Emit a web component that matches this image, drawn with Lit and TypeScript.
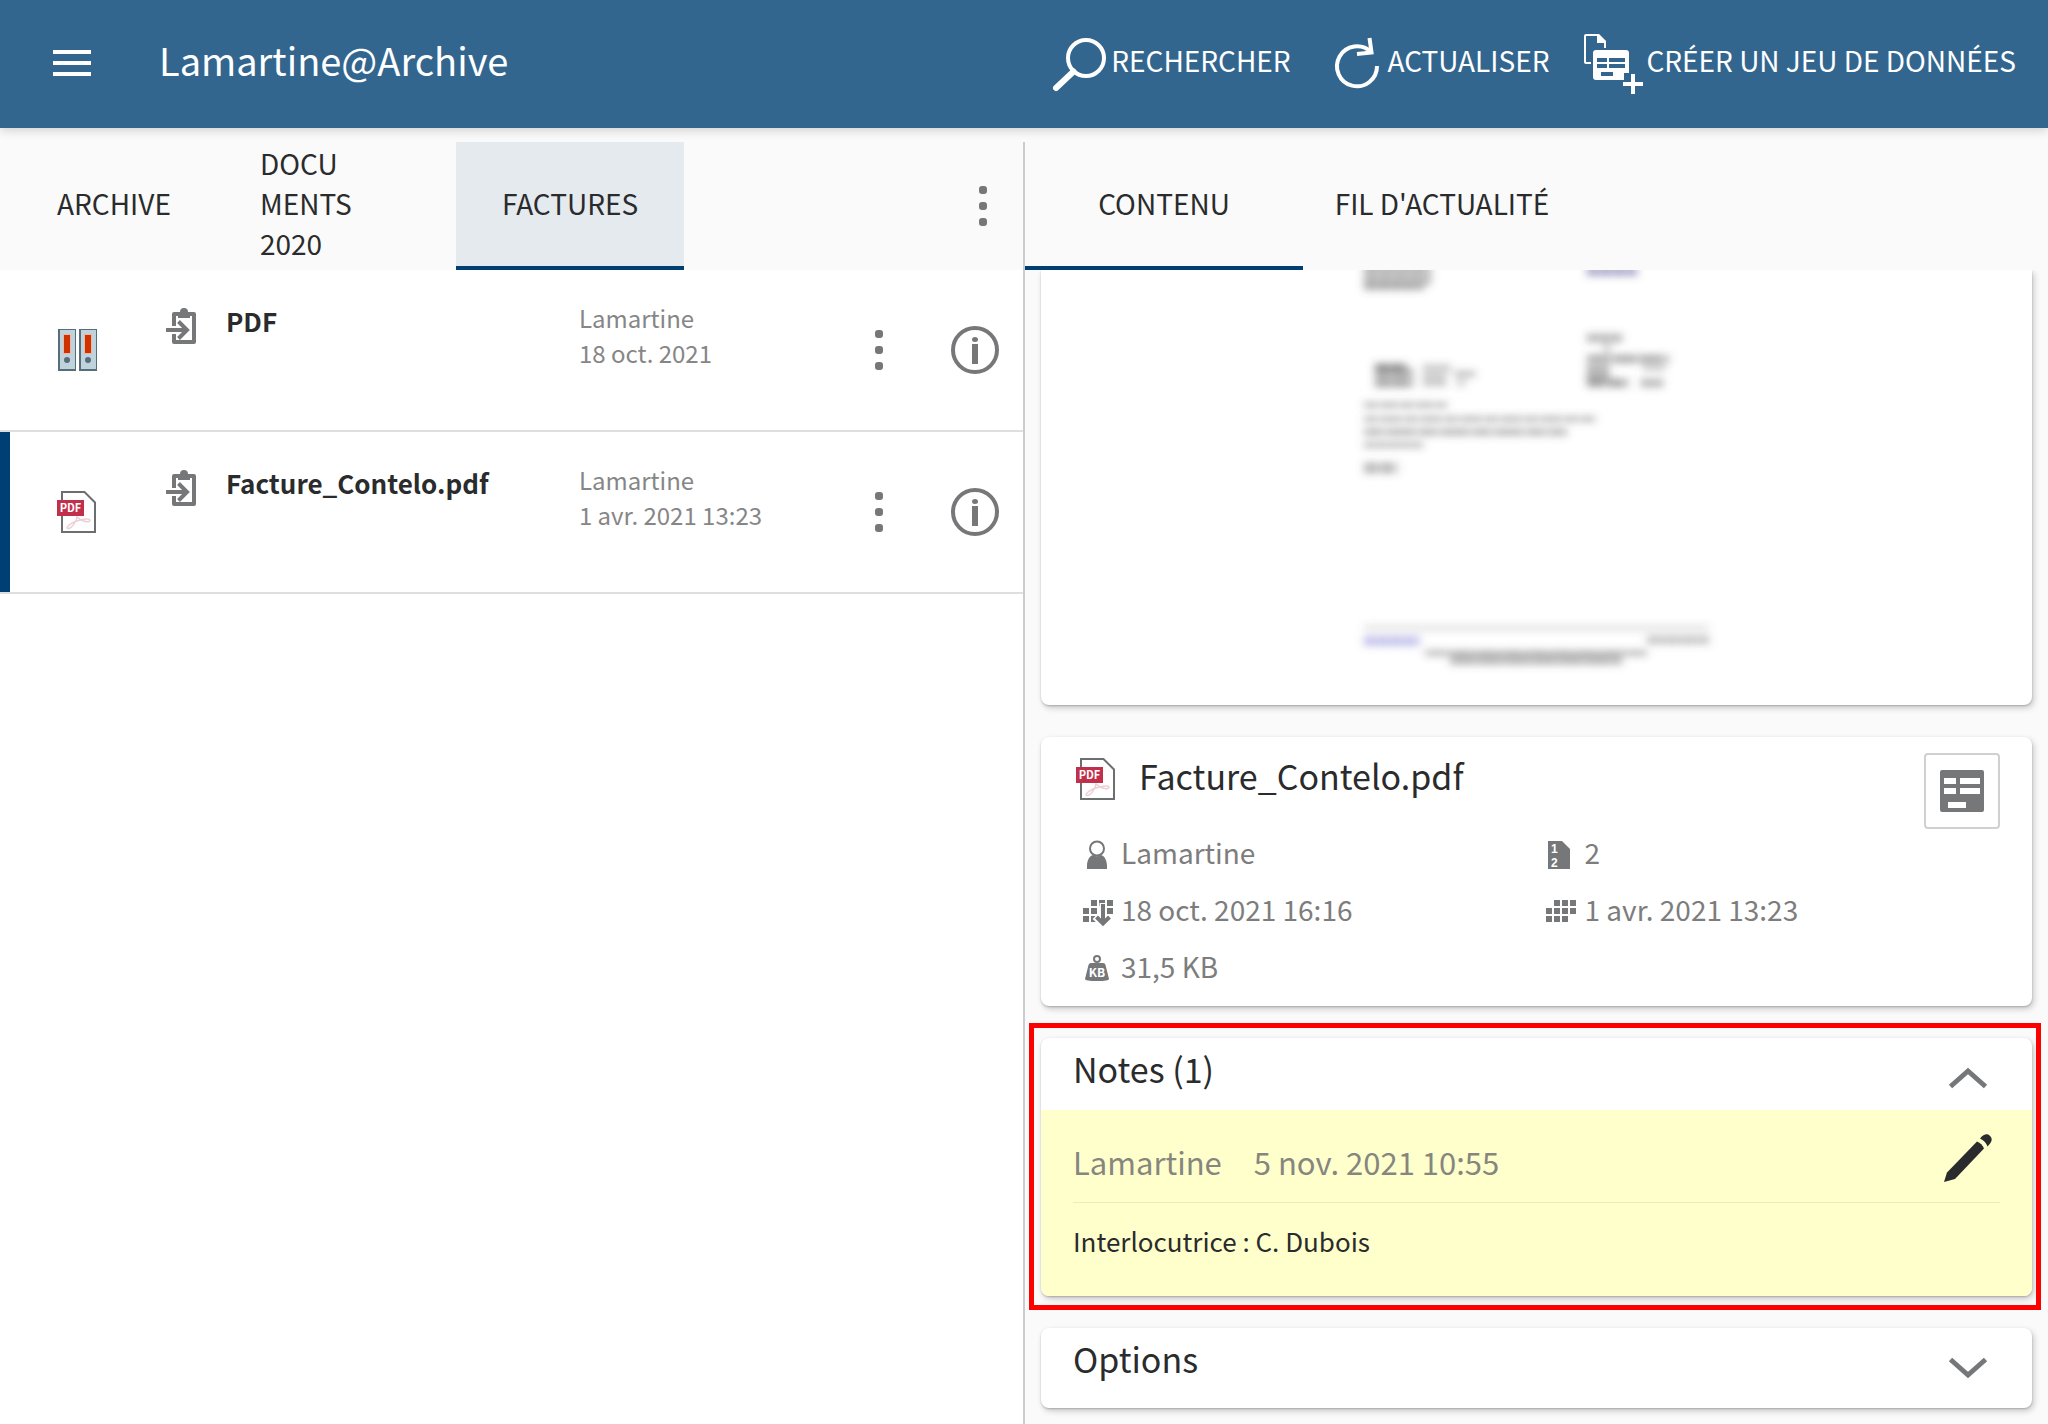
import { LitElement, html, css, svg, TemplateResult } from "lit";
import { customElement, property, state } from "lit/decorators.js";
import { classMap } from "lit/directives/class-map.js";

interface Entry {
  kind: "folder" | "pdf";
  name: string;
  owner: string;
  date: string;
}

const ENTRIES: Entry[] = [
  { kind: "folder", name: "PDF", owner: "Lamartine", date: "18 oct. 2021" },
  { kind: "pdf", name: "Facture_Contelo.pdf", owner: "Lamartine", date: "1 avr. 2021 13:23" },
];

const reset = css`
  * { box-sizing: border-box; }
  svg { display: block; flex: none; }
  button {
    margin: 0;
    padding: 0;
    border: 0;
    background: none;
    color: inherit;
    font: inherit;
    text-align: left;
    cursor: pointer;
  }
  h1, h2, p, ul { margin: 0; padding: 0; font-weight: inherit; }
  ul { list-style: none; }
`;

/* ---------- icons ---------- */

const menuIcon = html`<svg width="48" height="48" viewBox="0 0 48 48" aria-hidden="true">
  <path d="M5 12h38M5 23h38M5 34h38" stroke="#fff" stroke-width="4" />
</svg>`;

const searchIcon = html`<svg width="60" height="56" viewBox="0 0 60 56" fill="none" stroke="#fff" aria-hidden="true">
  <circle cx="35" cy="22" r="18" stroke-width="4" />
  <path d="M22.5 35.500L5 52" stroke-width="6" stroke-linecap="round" />
</svg>`;

const refreshIcon = html`<svg width="64" height="56" viewBox="0 0 64 56" fill="none" stroke="#fff" stroke-width="4" aria-hidden="true">
  <path d="M53 30A20 20 0 1 1 47 16" />
  <path d="M45.500 2L47.500 16.500L33 18" />
</svg>`;

const datasetIcon = html`<svg width="64" height="64" viewBox="0 0 64 64" aria-hidden="true">
  <path d="M9 31H4Q3 31 3 30V4Q3 3 4 3H16L23 10V16" fill="none" stroke="#fff" stroke-width="2" />
  <path d="M15 2H17L24 9V11H15Z" fill="#fff" />
  <path fill="#fff" fill-rule="evenodd" d="M14 18h30q3 0 3 3v20h-5v7H14q-3 0-3-3V21q0-3 3-3zM15 26v4h10v-4zM27 26v4h16v-4zM15 32v4h10v-4zM27 32v4h16v-4zM19 40v4h12v-4z" />
  <path d="M51 42v20M41 52h20" stroke="#fff" stroke-width="4" />
</svg>`;

const kebabIcon = html`<svg width="8" height="40" viewBox="0 0 8 40" fill="#757779" aria-hidden="true">
  <rect width="8" height="8" rx="3" /><rect y="16" width="8" height="8" rx="3" /><rect y="32" width="8" height="8" rx="3" />
</svg>`;

const infoIcon = html`<svg width="48" height="48" viewBox="0 0 48 48" aria-hidden="true">
  <circle cx="24" cy="24" r="22" fill="none" stroke="#757779" stroke-width="4" />
  <ellipse cx="24" cy="13.500" rx="3" ry="2.500" fill="#757779" />
  <path d="M21 18h6v20h-6z" fill="#757779" />
</svg>`;

const binder = (x: number) => svg`<g transform="translate(${x} 0)">
  <path d="M0 0h18v42H0z" fill="#566e7c" />
  <path d="M2 1h15v39H2z" fill="#bfd3dd" />
  <path d="M5 5h8v20H5z" fill="#efb6a5" />
  <path d="M6 6h6v18H6z" fill="#cc3300" />
  <circle cx="9" cy="31" r="3" fill="#566e7c" />
</g>`;

const folderIcon = html`<svg width="40" height="42" viewBox="0 0 40 42" aria-hidden="true">${binder(1)}${binder(22)}</svg>`;

const pdfIcon = html`<svg width="40" height="42" viewBox="0 0 40 42" role="img" aria-label="PDF">
  <path d="M5 1H27.500L38 11.500V41H5Z" fill="#fff" stroke="#6c6e70" stroke-width="2" />
  <path d="M20 25C20 30 15 37 11.500 37.500S11 33 20 30S33 28 33 29.500S26 32 20 26" fill="none" stroke="#ecd0d4" stroke-width="1.500" />
  <rect y="9" width="27" height="16" fill="#c1304b" />
  <text x="13.500" y="21" text-anchor="middle" font-size="11" font-weight="700" fill="#fff">PDF</text>
</svg>`;

const checkInIcon = html`<svg width="30" height="36" viewBox="0 0 30 36" aria-hidden="true">
  <path d="M8 18V6H28V34H8V26" fill="none" stroke="#757779" stroke-width="4" stroke-linejoin="round" />
  <path d="M12 4h2a4 4 0 0 1 8 0h2v6H12z" fill="#757779" />
  <path d="M0 22H21M12.500 13.500L21 22L12.500 30.500" fill="none" stroke="#757779" stroke-width="4" />
</svg>`;

const personIcon = html`<svg width="36" height="36" viewBox="0 0 36 36" aria-hidden="true">
  <ellipse cx="17" cy="14.500" rx="7" ry="7" fill="#fff" stroke="#757779" stroke-width="2" />
  <path d="M7 35V32C7 26 9.500 22 13 21Q17 23.500 21 21C24.500 22 27 26 27 32V35Z" fill="#757779" />
</svg>`;

const pagesIcon = html`<svg width="36" height="36" viewBox="0 0 36 36" aria-hidden="true">
  <path d="M4 7H18L26 15V35H4Z" fill="#757779" />
  <g class="digits" font-size="12" font-weight="700" fill="#fff">
    <text x="7" y="19">1</text>
    <text x="7" y="33">2</text>
  </g>
</svg>`;

const squares = (dx: number, cells: [number, number][]) =>
  cells.map(([c, r]) => svg`<rect x=${dx + c * 8} y=${9 + r * 8} width="6" height="6" fill="#757779" />`);

const calendarIcon = html`<svg width="36" height="36" viewBox="0 0 36 36" aria-hidden="true">
  ${squares(2, [[1, 0], [2, 0], [3, 0], [0, 1], [1, 1], [2, 1], [3, 1], [0, 2], [1, 2], [2, 2]])}
</svg>`;

const importDateIcon = html`<svg width="36" height="36" viewBox="0 0 36 36" aria-hidden="true">
  ${squares(3, [[1, 0], [2, 0], [3, 0], [0, 1], [1, 1], [3, 1], [0, 2], [1, 2]])}
  <path d="M23 12V33M15 25.500L23 33L31 25.500" fill="none" stroke="#fff" stroke-width="7" />
  <path d="M23 13V32M16.500 26L23 32.500L29.500 26" fill="none" stroke="#757779" stroke-width="4" />
</svg>`;

const weightIcon = html`<svg width="36" height="36" viewBox="0 0 36 36" aria-hidden="true">
  <circle cx="17" cy="11" r="3" fill="none" stroke="#757779" stroke-width="2" />
  <path d="M11 15H23Q25 15 25.500 17L29 31Q29 33 17 33T5 31L8.500 17Q9 15 11 15Z" fill="#757779" />
  <text x="17" y="29" text-anchor="middle" font-size="12" font-weight="700" fill="#fff">KB</text>
</svg>`;

const formIcon = html`<svg width="44" height="42" viewBox="0 0 44 42" aria-hidden="true">
  <path fill="#757779" fill-rule="evenodd" d="M2 0h40q2 0 2 2v38q0 2-2 2H2q-2 0-2-2V2q0-2 2-2zM4 8v6h12V8zM20 8v6h20V8zM4 18v6h12v-6zM20 18v6h20v-6zM8 32v6h18v-6z" />
</svg>`;

const chevron = (open: boolean) => html`<svg width="40" height="40" viewBox="0 0 40 40" aria-hidden="true">
  <path d=${open ? "M2.500 28.500L20 13L37.500 28.500" : "M2.500 11.500L20 27L37.500 11.500"} fill="none" stroke="#757779" stroke-width="5" />
</svg>`;

const pencilIcon = html`<svg width="48" height="48" viewBox="0 0 48 48" fill="#2a2b2d" aria-hidden="true">
  <path d="M0 48L3 38.500L33 7.500Q38 9.500 40 14.500L11 45Z" />
  <path d="M36 4.500C40-.500 44-.500 46 2C49 5 48 8 43.500 12.500Q41.500 7 36 4.500Z" />
</svg>`;

/* ---------- left pane ---------- */

@customElement("archive-list")
export class ArchiveList extends LitElement {
  @state() private selected = 1;

  static styles = [
    reset,
    css`
      :host { display: flex; flex-direction: column; background: #fff; border-right: 2px solid #ccc; }
      svg text { font-family: "Noto Sans CJK SC", sans-serif; }
      .tabs { display: flex; height: 128px; background: #fafafa; }
      .tab {
        flex: 0 1 228px;
        padding: 0 32px 2px;
        border-bottom: 4px solid transparent;
        font-size: 28px;
        line-height: 40px;
        text-align: center;
      }
      .tab.wrapped { text-align: left; }
      .tab.active { background: #e5eaee; border-bottom-color: #003f73; }
      .more { display: flex; align-items: center; justify-content: center; width: 80px; margin-left: auto; }
      .row {
        display: grid;
        grid-template-columns: 156px 60px minmax(0, 7fr) minmax(0, 5fr) 96px 96px;
        height: 162px;
        border-left: 10px solid transparent;
        background: linear-gradient(#dfdfdf, #dfdfdf) bottom / 100% 2px no-repeat border-box;
        padding-bottom: 2px;
      }
      .row.selected { border-image: linear-gradient(#003f73 160px, #dfdfdf 160px) 0 0 0 10; }
      .kind { align-self: center; padding-left: 47px; }
      .state { padding-top: 38px; }
      .name { padding-top: 33px; font-size: 26px; font-weight: 700; line-height: 35px; }
      .meta { padding-top: 30px; font-size: 24px; line-height: 35px; color: #868686; }
      .action { display: flex; align-items: center; justify-content: center; }
    `,
  ];

  render() {
    return html`
      <nav class="tabs" aria-label="Chemin">
        <button class="tab">ARCHIVE</button>
        <button class="tab wrapped">DOCU<br />MENTS<br />2020</button>
        <button class="tab active" aria-current="page">FACTURES</button>
        <button class="more" aria-label="Plus">${kebabIcon}</button>
      </nav>
      <ul>
        ${ENTRIES.map(
          (e, i) => html`<li
            class=${classMap({ row: true, selected: i === this.selected })}
            @click=${() => (this.selected = i)}
          >
            <div class="kind">${e.kind === "pdf" ? pdfIcon : folderIcon}</div>
            <div class="state">${checkInIcon}</div>
            <div class="name">${e.name}</div>
            <div class="meta"><p>${e.owner}</p><p>${e.date}</p></div>
            <button class="action" aria-label="Actions">${kebabIcon}</button>
            <button class="action" aria-label="Informations">${infoIcon}</button>
          </li>`
        )}
      </ul>
    `;
  }
}

/* ---------- blurred page preview ---------- */

const smudge = (x: number, y: number, w: number, h: number, o: number, dash = "11 1", c = "#555") =>
  svg`<path d="M${x} ${y}h${w}" stroke=${c} stroke-width=${h} stroke-dasharray=${dash} opacity=${o} />`;

@customElement("page-preview")
export class PagePreview extends LitElement {
  static styles = [reset, css`:host { display: flex; justify-content: center; overflow: hidden; }`];

  render() {
    return html`<svg width="400" height="435" viewBox="0 0 400 435" role="img" aria-label="Aperçu du document">
      <defs><filter id="soft" x="-10" y="-20" width="420" height="470" filterUnits="userSpaceOnUse"><feGaussianBlur stdDeviation="4.200 3.600" /></filter></defs>
      <g filter="url(#soft)">
        ${smudge(27, 4, 67, 22, 0.4, "14 1")}
        ${smudge(27, 17, 60, 8, 0.4, "12 1")}
        ${smudge(250, 1, 50, 11, 0.5, "12 1", "#6060a0")}
        ${smudge(250, 68, 36, 10, 0.38)}
        ${smudge(266, 78, 8, 10, 0.25)}
        ${smudge(250, 89, 82, 10, 0.4, "24 2")}
        ${smudge(250, 103, 22, 16, 0.45)}
        ${smudge(306, 98, 22, 8, 0.25)}
        ${smudge(250, 113, 42, 10, 0.45, "18 2")}
        ${smudge(304, 113, 22, 10, 0.38)}
        ${smudge(38, 97, 32, 9, 0.5, "14 1")}
        ${smudge(38, 108, 38, 20, 0.45, "16 1")}
        ${smudge(86, 98, 28, 9, 0.28)}
        ${smudge(86, 110, 24, 14, 0.3)}
        ${smudge(118, 104, 20, 8, 0.32)}
        ${smudge(120, 113, 8, 8, 0.26)}
        ${smudge(27, 135, 83, 8, 0.3, "14 2 18 2")}
        ${smudge(27, 149, 231, 8, 0.3, "14 2 22 2")}
        ${smudge(27, 162, 203, 9, 0.32, "20 2 30 2")}
        ${smudge(27, 175, 60, 8, 0.3)}
        ${smudge(27, 198, 34, 12, 0.38, "14 2")}
        ${smudge(27, 358, 345, 8, 0.12, "none")}
        ${smudge(27, 371, 56, 11, 0.4, "12 1", "#7070d0")}
        ${smudge(310, 370, 62, 10, 0.3, "16 1")}
        ${smudge(88, 383, 222, 8, 0.3, "24 1")}
        ${smudge(113, 390, 172, 11, 0.36, "26 1")}
      </g>
    </svg>`;
  }
}

/* ---------- right pane ---------- */

@customElement("detail-card")
export class DetailCard extends LitElement {
  @property() heading = "";
  @property({ type: Boolean }) open = false;

  static styles = [
    reset,
    css`
      :host {
        display: block;
        border-radius: 8px;
        background: #fff;
        box-shadow: 0 1px 2px rgba(0, 0, 0, 0.2), 2px 3px 6px rgba(0, 0, 0, 0.2);
      }
      .toggle { display: flex; justify-content: space-between; width: 100%; height: 80px; padding: 0 44px 0 32px; }
      .toggle.open { height: 72px; }
      .title { font-size: 34px; line-height: 62px; }
      .mark { padding-top: 20px; }
      .body { border-radius: 0 0 8px 8px; overflow: hidden; }
    `,
  ];

  render() {
    return html`
      <h2>
        <button
          class=${classMap({ toggle: true, open: this.open })}
          aria-expanded=${this.open ? "true" : "false"}
          @click=${() => (this.open = !this.open)}
        >
          <span class="title">${this.heading}</span>
          <span class="mark">${chevron(this.open)}</span>
        </button>
      </h2>
      ${this.open ? html`<div class="body"><slot></slot></div>` : ""}
    `;
  }
}

@customElement("document-details")
export class DocumentDetails extends LitElement {
  static styles = [
    reset,
    css`
      :host { display: flex; flex-direction: column; background: #fafafa; }
      svg text { font-family: "Noto Sans CJK SC", sans-serif; }
      svg .digits text { font-family: "Liberation Sans", sans-serif; }
      .tabs { display: flex; height: 128px; }
      .tab {
        flex: 0 1 278px;
        padding-bottom: 2px;
        border-bottom: 4px solid transparent;
        font-size: 28px;
        line-height: 40px;
        text-align: center;
        white-space: nowrap;
      }
      .tab.active { border-bottom-color: #003f73; }
      .scroll { padding: 0 16px 16px; overflow: hidden; }
      .stack { display: flex; flex-direction: column; gap: 32px; }
      .card {
        border-radius: 8px;
        background: #fff;
        box-shadow: 0 1px 2px rgba(0, 0, 0, 0.2), 2px 3px 6px rgba(0, 0, 0, 0.2);
      }
      .preview { border-radius: 0 0 8px 8px; }
      .file { padding: 16px 32px 17px; }
      .file-head { display: flex; align-items: flex-start; }
      .file-kind { padding: 5px 23px 0 3px; }
      .file-name { font-size: 34px; line-height: 46px; }
      .form {
        display: flex;
        align-items: center;
        justify-content: center;
        width: 76px;
        height: 76px;
        margin-left: auto;
        border: 2px solid #d0d0d0;
        border-radius: 4px;
      }
      .facts { display: grid; grid-template-columns: 1fr 1fr; row-gap: 11px; }
      .fact {
        display: flex;
        align-items: center;
        gap: 5px;
        height: 46px;
        padding-left: 7px;
        font-size: 28px;
        line-height: 46px;
        color: #7d7d7d;
      }
      .marked { position: relative; }
      .outline { position: absolute; inset: -15px -9px -14px -12px; border: 5px solid #f00; pointer-events: none; }
      .note { padding: 0 32px 35px; background: #ffffcc; }
      .note-head {
        display: flex;
        gap: 32px;
        padding: 24px 8px 12px 0;
        border-bottom: 1px solid #ebebbc;
        font-size: 31px;
        line-height: 56px;
        color: #86867f;
      }
      .edit { height: 48px; margin-left: auto; }
      .note-text { padding-top: 18px; font-size: 26px; line-height: 40px; }
    `,
  ];

  private fact(icon: TemplateResult, text: string) {
    return html`<li class="fact">${icon}<span>${text}</span></li>`;
  }

  render() {
    return html`
      <nav class="tabs" aria-label="Vues">
        <button class="tab active" aria-current="page">CONTENU</button>
        <button class="tab">FIL D'ACTUALITÉ</button>
      </nav>
      <div class="scroll">
        <div class="stack">
          <page-preview class="card preview"></page-preview>
          <section class="card file">
            <div class="file-head">
              <div class="file-kind">${pdfIcon}</div>
              <h2 class="file-name">Facture_Contelo.pdf</h2>
              <button class="form" aria-label="Métadonnées">${formIcon}</button>
            </div>
            <ul class="facts">
              ${this.fact(personIcon, "Lamartine")} ${this.fact(pagesIcon, "2")}
              ${this.fact(importDateIcon, "18 oct. 2021 16:16")} ${this.fact(calendarIcon, "1 avr. 2021 13:23")}
              ${this.fact(weightIcon, "31,5 KB")}
            </ul>
          </section>
          <div class="marked">
            <detail-card heading="Notes (1)" open>
              <article class="note">
                <header class="note-head">
                  <span>Lamartine</span>
                  <time datetime="2021-11-05T10:55">5 nov. 2021 10:55</time>
                  <button class="edit" aria-label="Modifier">${pencilIcon}</button>
                </header>
                <p class="note-text">Interlocutrice : C. Dubois</p>
              </article>
            </detail-card>
            <div class="outline"></div>
          </div>
          <detail-card heading="Options"></detail-card>
        </div>
      </div>
    `;
  }
}

/* ---------- page ---------- */

@customElement("app-root")
export class AppRoot extends LitElement {
  static styles = [
    reset,
    css`
      :host {
        display: flex;
        flex-direction: column;
        min-height: 100vh;
        background: #fafafa;
        color: #2a2b2d;
        font-family: "Noto Sans CJK SC", "Noto Sans", sans-serif;
        font-weight: 400;
      }
      .bar {
        display: flex;
        align-items: center;
        height: 128px;
        padding: 0 32px 0 48px;
        background: #33668f;
        color: #fff;
        box-shadow: 0 2px 10px rgba(0, 0, 0, 0.18);
      }
      .title { padding: 0 0 8px 63px; font-size: 38px; line-height: 56px; }
      .actions { display: flex; gap: 33px; margin-left: auto; font-size: 28px; line-height: 40px; white-space: nowrap; }
      .action { display: flex; align-items: center; }
      .label { padding-bottom: 8px; }
      .panes { flex: 1; display: flex; margin-top: 14px; }
      .list { flex: 0 0 calc(50% + 1px); }
      .details { flex: 1; min-width: 0; }
    `,
  ];

  render() {
    return html`
      <header class="bar">
        <button aria-label="Menu">${menuIcon}</button>
        <h1 class="title">Lamartine@Archive</h1>
        <div class="actions">
          <button class="action">${searchIcon}<span class="label">RECHERCHER</span></button>
          <button class="action">${refreshIcon}<span class="label">ACTUALISER</span></button>
          <button class="action">${datasetIcon}<span class="label">CRÉER UN JEU DE DONNÉES</span></button>
        </div>
      </header>
      <main class="panes">
        <archive-list class="list"></archive-list>
        <document-details class="details"></document-details>
      </main>
    `;
  }
}
